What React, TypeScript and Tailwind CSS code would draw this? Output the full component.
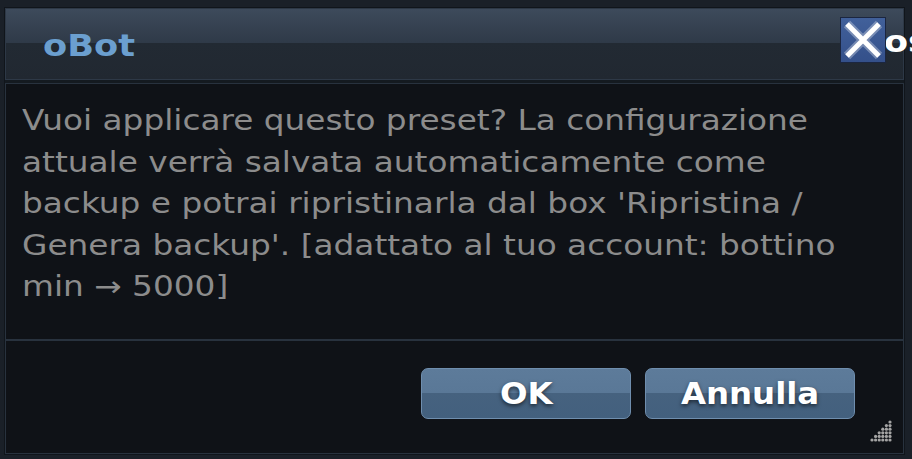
import React from "react";

function Grip() {
  return (
    <svg width="24" height="24" viewBox="0 0 24 24" className="absolute right-[10px] bottom-[10px]">
      {[0, 1, 2, 3, 4, 5].map((r) =>
        Array.from({ length: r + 1 }).map((_, c) => (
          <circle key={`${r}-${c}`} cx={21 - c * 3.6} cy={3 + r * 3.6} r="1.6" fill="#a4a4a4" />
        ))
      )}
    </svg>
  );
}

export default function App() {
  const font = { fontFamily: '"DejaVu Sans", Verdana, sans-serif' };
  return (
    <div
      className="w-[912px] h-[459px] bg-[#1a2028] pl-[4px] pt-[7px] pr-[7px] pb-[4px] overflow-hidden"
      style={font}
    >
      <div className="relative h-full w-full bg-[#141a20] border border-[#10151b] flex flex-col">
        {/* title bar */}
        <div className="relative h-[72px] border border-[#2d3846] bg-[linear-gradient(to_bottom,#3d4a5b_0%,#2f3a48_48%,#222a33_49%,#212831_100%)] flex items-center pl-[37px]">
          <span className="inline-block origin-left scale-x-[1.135] text-[31px] font-bold text-[#6b9fcf] leading-none mt-[2px]">oBot</span>
          <span className="absolute left-[878px] top-[17px] origin-left scale-x-[1.13] text-[31px] font-bold text-white leading-none">os</span>
          <div className="absolute left-[834px] top-[8px] w-[46px] h-[46px] border border-[#1b2640] bg-[linear-gradient(to_bottom,#41609a,#34508a)] flex items-center justify-center">
            <svg width="44" height="44" viewBox="0 0 44 44">
              <path d="M6 6 L38 38 M38 6 L6 38" stroke="white" strokeWidth="9" strokeLinecap="butt" opacity="0.3" />
              <path d="M6 6 L38 38 M38 6 L6 38" stroke="white" strokeWidth="5" strokeLinecap="butt" />
            </svg>
          </div>
        </div>
        {/* content */}
        <div className="relative mt-[3px] flex-1 bg-[#0f1217] border border-[#28323e] flex flex-col">
          <div className="h-[255px] pl-[16px] pt-[16px]">
            <div className="origin-left scale-x-[1.17] text-[28px] leading-[41.5px] text-[#8c8c8c] whitespace-nowrap">
              Vuoi applicare questo preset? La configurazione
              <br />
              attuale verrà salvata automaticamente come
              <br />
              backup e potrai ripristinarla dal box 'Ripristina /
              <br />
              Genera backup'. [adattato al tuo account: bottino
              <br />
              min → 5000]
            </div>
          </div>
          <div className="h-[2px] bg-[#28323e]" />
          <div className="flex-1 flex justify-end items-start pt-[27px] pr-[48px] gap-[14px]">
            {["OK", "Annulla"].map((t) => (
              <button
                key={t}
                className="w-[210px] h-[51px] rounded-[7px] border border-[#6f8eae] bg-[linear-gradient(to_bottom,#5d7b9a_0%,#5a7897_48%,#46627f_49%,#43607e_100%)] text-white font-bold text-[30px] leading-none [text-shadow:0_2px_4px_rgba(0,0,0,0.6)] flex items-center justify-center"
                style={font}
              >
                <span className="inline-block scale-x-[1.08]">{t}</span>
              </button>
            ))}
          </div>
          <Grip />
        </div>
      </div>
    </div>
  );
}
